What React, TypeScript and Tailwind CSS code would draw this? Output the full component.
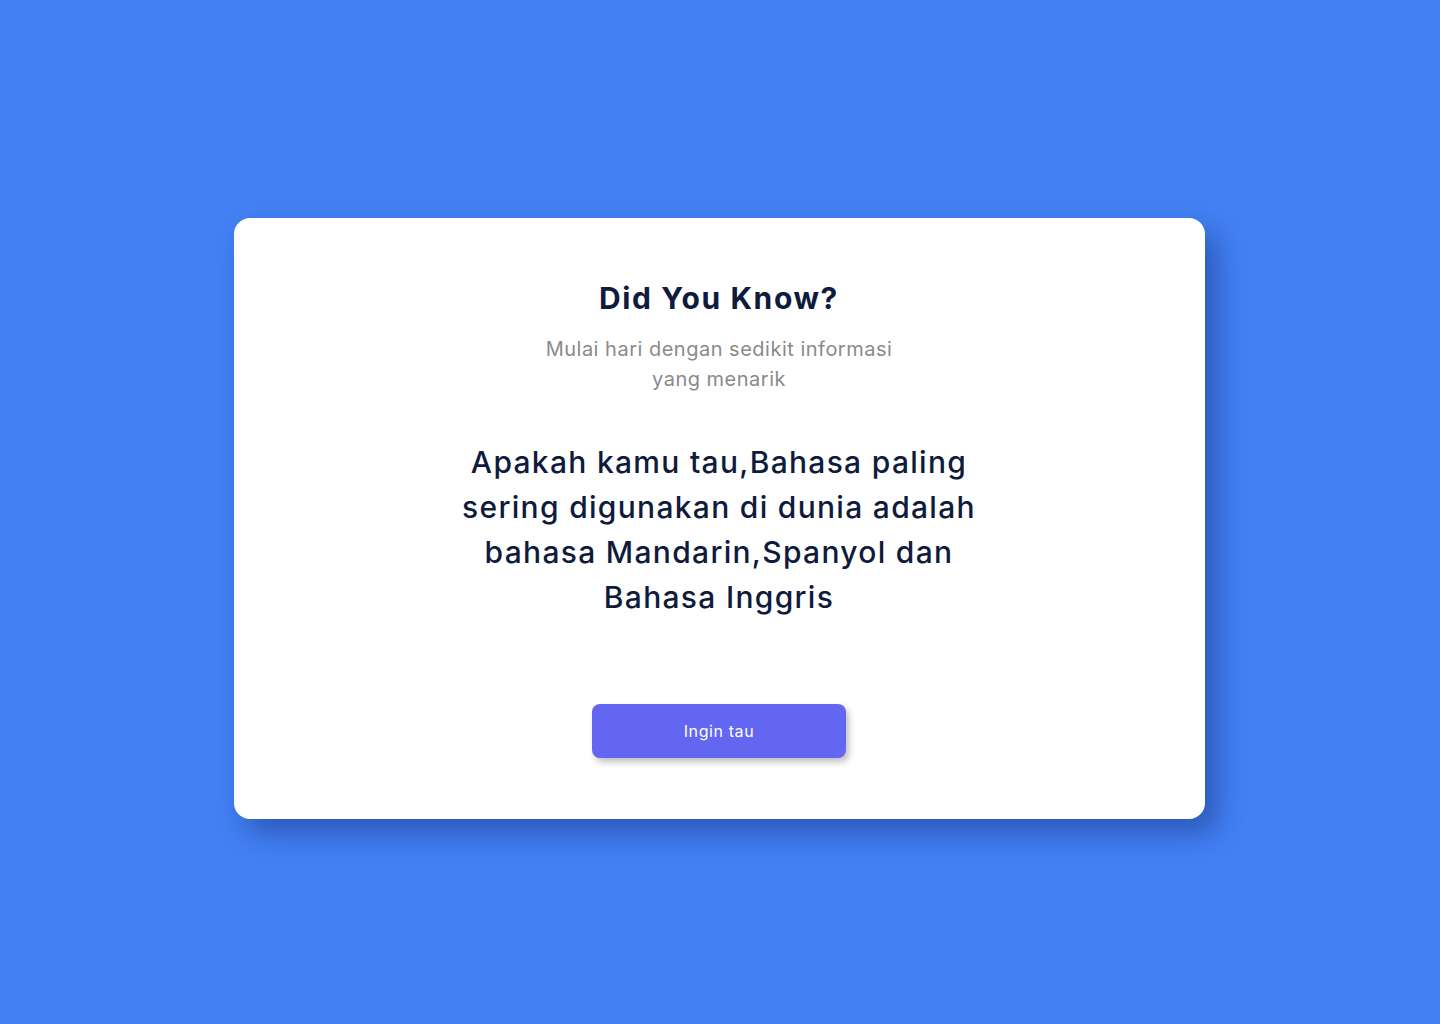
const App = () => {
  return (
    <div
      className="flex min-h-screen w-full items-center justify-center bg-[#4280f4] pt-[12px] pr-[2px]"
      style={{ fontFamily: 'Inter, "Noto Sans", sans-serif' }}
    >
      <div className="flex w-[971px] flex-col items-center rounded-2xl bg-white px-10 pt-[62px] pb-[61px] text-center shadow-[12px_14px_28px_rgba(20,40,110,0.45)]">
        {/* Heading */}
        <h1 className="text-[30px] leading-9 font-bold tracking-[1.6px] text-[#0f1b3d]">Did You Know?</h1>
        <p className="mt-[18px] max-w-[380px] text-[20px] leading-[30px] tracking-[0.5px] text-[#8a8a8a]">
          Mulai hari dengan sedikit informasi yang menarik
        </p>

        {/* Fact */}
        <p className="mt-[46px] max-w-[560px] text-[30px] leading-[45px] font-medium tracking-[1.3px] text-[#0f1b3d]">
          Apakah kamu tau,Bahasa paling sering digunakan di dunia adalah bahasa Mandarin,Spanyol dan Bahasa Inggris
        </p>

        <button className="mt-[84px] h-[54px] w-[254px] rounded-lg bg-[#6366f1] text-base tracking-[0.6px] text-white shadow-[3px_4px_6px_rgba(0,0,0,0.25)]">
          Ingin tau
        </button>
      </div>
    </div>
  );
};

export default App;
